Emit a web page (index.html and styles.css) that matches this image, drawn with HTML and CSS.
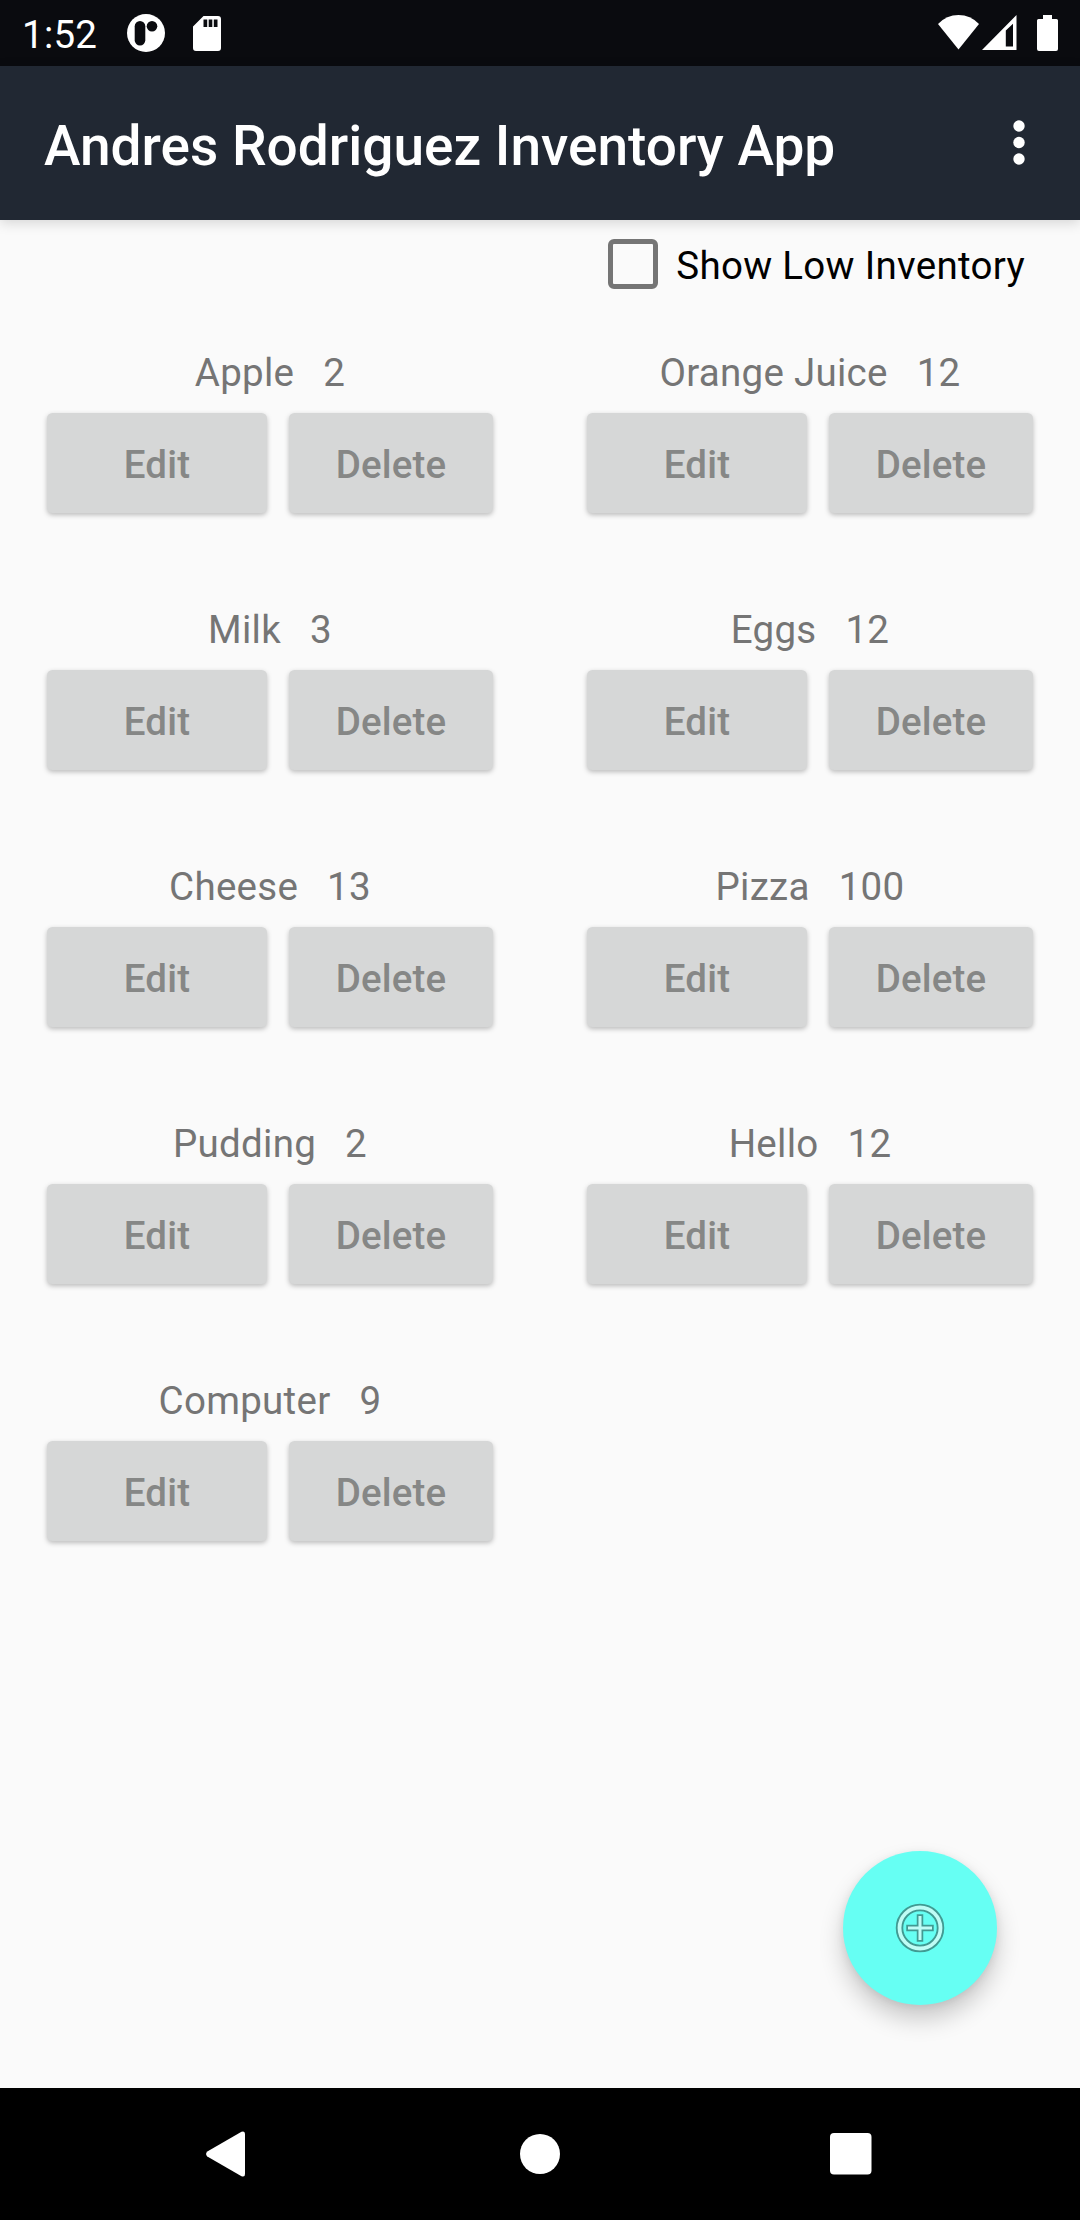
FILE: index.html
```html
<!DOCTYPE html>
<html lang="en">
<head>
<meta charset="utf-8">
<title>Andres Rodriguez Inventory App</title>
<link rel="stylesheet" href="styles.css">
</head>
<body>
<div class="screen">
  <div class="status-bar">
    <span class="clock">1:52</span>
    <svg class="notif" width="38" height="38" viewBox="0 0 38 38"><circle cx="19" cy="19" r="19" fill="#fff"/><rect x="7.7" y="7" width="10.6" height="24.5" rx="5.3" fill="#0a0b0f"/><circle cx="25" cy="12.2" r="5.3" fill="#0a0b0f"/></svg>
    <svg class="sd" width="28" height="35" viewBox="0 0 28 35"><path fill="#fff" fill-rule="evenodd" d="M10.5 0H25a3 3 0 0 1 3 3V32a3 3 0 0 1-3 3H3a3 3 0 0 1-3-3V10.500zM10.500 3.500v7.500h3.700V3.500zM15.700 3.500v7.500h3.600V3.500zM20.800 3.500v7.500h3.700V3.500z"/></svg>
    <span class="spacer"></span>
    <svg class="wifi" width="41" height="35" viewBox="0 0 41 35"><path fill="#fff" d="M0 9Q8.500 0 20.500 0T41 9L20.500 34.500z"/></svg>
    <svg class="signal" width="35" height="35" viewBox="0 0 35 35"><path fill="#fff" fill-rule="evenodd" d="M0 35L34.500 0V35zM23.800 15.500V31.500H31V8.700z"/></svg>
    <svg class="battery" width="21" height="36" viewBox="0 0 21 36"><path fill="#fff" d="M6 0h9v4h4.500Q21 4 21 5.500v28.500Q21 36 19 36H2Q0 36 0 34V5.500Q0 4 1.500 4H6z"/></svg>
  </div>
  <header class="app-bar">
    <h1 class="title">Andres Rodriguez Inventory App</h1>
    <svg class="overflow" width="12" height="46" viewBox="0 0 12 46"><g fill="#fff"><circle cx="6" cy="6" r="5.700"/><circle cx="6" cy="22.500" r="5.700"/><circle cx="6" cy="39" r="5.700"/></g></svg>
  </header>
  <main class="content">
    <label class="filter"><span class="box"></span><span class="filter-label">Show Low Inventory</span></label>
    <div class="grid">
      <div class="item"><div class="info"><span>Apple</span><span>2</span></div><div class="actions"><button class="btn edit">Edit</button><button class="btn delete">Delete</button></div></div>
      <div class="item"><div class="info"><span>Orange Juice</span><span>12</span></div><div class="actions"><button class="btn edit">Edit</button><button class="btn delete">Delete</button></div></div>
      <div class="item"><div class="info"><span>Milk</span><span>3</span></div><div class="actions"><button class="btn edit">Edit</button><button class="btn delete">Delete</button></div></div>
      <div class="item"><div class="info"><span>Eggs</span><span>12</span></div><div class="actions"><button class="btn edit">Edit</button><button class="btn delete">Delete</button></div></div>
      <div class="item"><div class="info"><span>Cheese</span><span>13</span></div><div class="actions"><button class="btn edit">Edit</button><button class="btn delete">Delete</button></div></div>
      <div class="item"><div class="info"><span>Pizza</span><span>100</span></div><div class="actions"><button class="btn edit">Edit</button><button class="btn delete">Delete</button></div></div>
      <div class="item"><div class="info"><span>Pudding</span><span>2</span></div><div class="actions"><button class="btn edit">Edit</button><button class="btn delete">Delete</button></div></div>
      <div class="item"><div class="info"><span>Hello</span><span>12</span></div><div class="actions"><button class="btn edit">Edit</button><button class="btn delete">Delete</button></div></div>
      <div class="item"><div class="info"><span>Computer</span><span>9</span></div><div class="actions"><button class="btn edit">Edit</button><button class="btn delete">Delete</button></div></div>
    </div>
    <button class="fab" aria-label="Add item">
      <svg width="50" height="50" viewBox="0 0 50 50" fill="none"><circle cx="25" cy="25" r="20.500" stroke="#419a92" stroke-width="7.500"/><circle cx="25" cy="25" r="20.500" stroke="#bffcf5" stroke-width="3.800"/><path d="M25 14.500v21M14.500 25h21" stroke="#419a92" stroke-width="6.500" stroke-linecap="square"/><path d="M25 13v24M13 25h24" stroke="#bffcf5" stroke-width="3"/></svg>
    </button>
  </main>
  <nav class="nav-bar">
    <svg class="back" width="40" height="46" viewBox="0 0 40 46"><path fill="#fff" d="M1.300 20.500L35.500 .8Q39 -.5 39 3V43Q39 46.500 35.500 45.200L1.300 25.500Q-1.200 23 1.300 20.500z"/></svg>
    <svg width="40" height="40" viewBox="0 0 40 40"><circle cx="20" cy="20" r="20" fill="#fff"/></svg>
    <svg width="42" height="42" viewBox="0 0 42 42"><rect width="41.500" height="41.500" rx="4" fill="#fff"/></svg>
  </nav>
</div>
</body>
</html>
```

FILE: styles.css
```css
* { box-sizing: border-box; }
body { margin: 0; font-family: Roboto, "Liberation Sans", sans-serif; }
svg { display: block; flex: none; }

.screen { width: 1080px; height: 2220px; display: flex; flex-direction: column; background: #fafafa; }

.status-bar { height: 66px; background: #0a0b0f; display: flex; align-items: flex-start; padding: 0 22px; color: #fff; }
.clock { width: 105px; font-size: 38.5px; line-height: 46px; letter-spacing: .25px; margin-top: 12px; }
.notif { margin-top: 14px; }
.sd { margin: 16px 0 0 28px; }
.spacer { flex: 1; }
.wifi { margin-top: 15px; }
.signal { margin: 15px 0 0 3px; }
.battery { margin: 15px 0 0 20px; }

.app-bar { height: 154px; background: #212833; display: flex; align-items: center; justify-content: space-between; padding: 0 55px 0 44px; box-shadow: 0 3px 12px rgba(0, 0, 0, .15); }
.title { margin: 6px 0 0; font-size: 55px; line-height: 64px; font-weight: 500; color: #fff; white-space: nowrap; }

.content { flex: 1; position: relative; }
.filter { display: flex; align-items: center; justify-content: flex-end; height: 88px; padding: 0 55px 0 0; }
.box { width: 50px; height: 50px; border: 5.500px solid #757575; border-radius: 6px; }
.filter-label { margin: 4px 0 0 18px; font-size: 38.5px; line-height: 46px; letter-spacing: .3px; color: #000; white-space: nowrap; }

.grid { display: grid; grid-template-columns: repeat(2, 540px); grid-auto-rows: 257px; padding-top: 42px; }
.item { padding: 0 47px; }
.info { display: flex; justify-content: center; gap: 29px; height: 63px; font-size: 38.5px; line-height: 46px; letter-spacing: .27px; color: #757575; }
.actions { display: flex; gap: 22px; }
.btn { height: 100px; border: 0; border-radius: 5.500px; padding: 4px 0 0; background: #d6d7d7; color: #868786; font: 500 38.5px/46px Roboto, "Liberation Sans", sans-serif; letter-spacing: .15px; box-shadow: 0 2px 5px rgba(0, 0, 0, .25); }
.edit { width: 220px; }
.delete { width: 204px; }

.fab { position: absolute; right: 83px; bottom: 83px; width: 154px; height: 154px; border: 0; border-radius: 50%; padding: 0; display: flex; align-items: center; justify-content: center; background: #66fff3; box-shadow: 0 14px 24px rgba(0, 0, 0, .2), 0 2px 8px rgba(0, 0, 0, .08); }

.nav-bar { height: 132px; background: #000; display: flex; align-items: center; justify-content: space-between; padding: 0 208px 0 206px; }
.back { margin-right: 4px; }
```
